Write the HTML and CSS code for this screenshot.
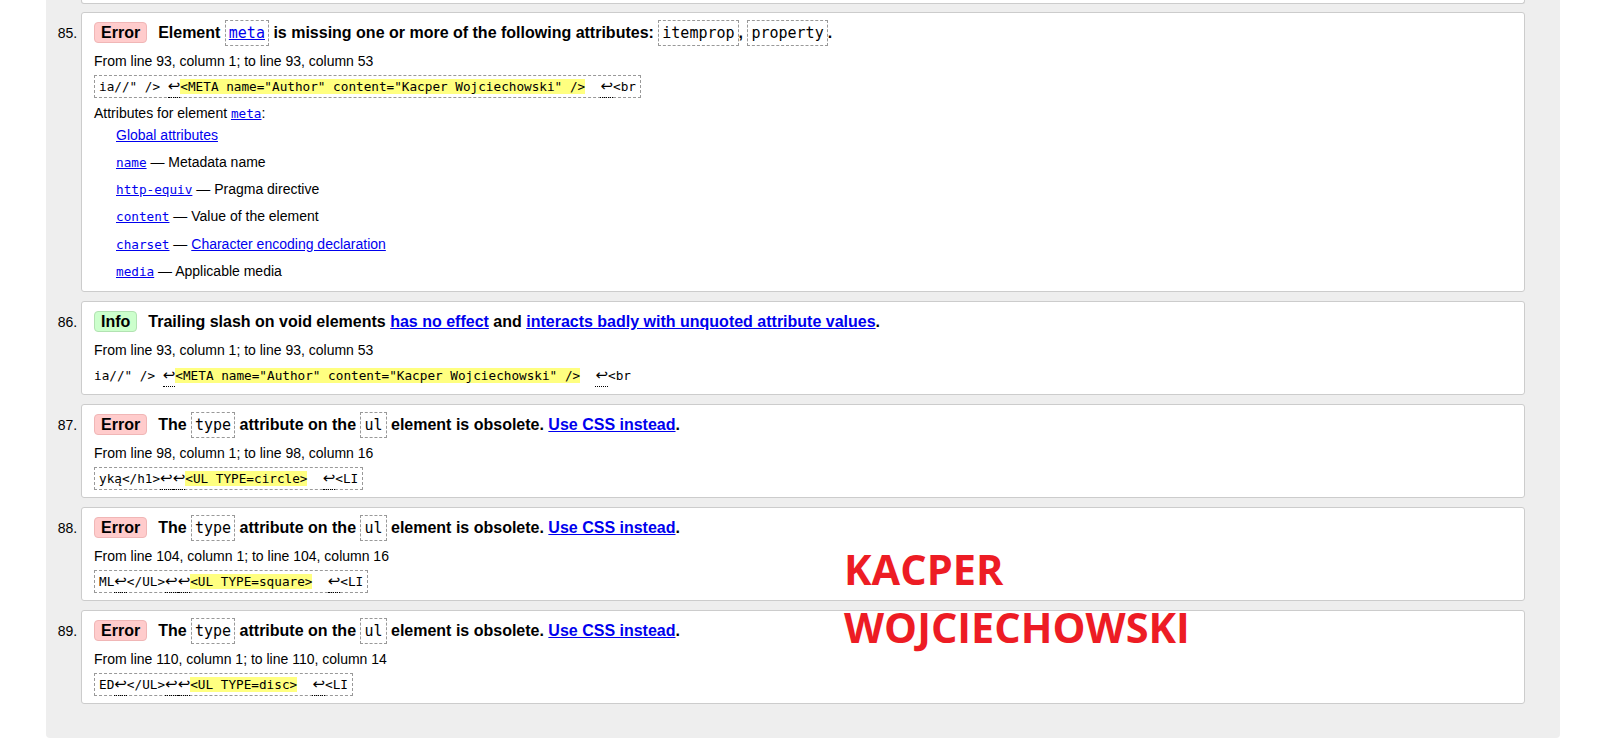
FILE: index.html
```html
<!DOCTYPE html>
<html lang="en">
<head>
<meta charset="utf-8">
<title>Validation results</title>
<link rel="stylesheet" href="styles.css">
</head>
<body>
<div class="results">
  <div class="stub"></div>
  <ol class="messages" start="85">
    <li class="msg error">
      <p class="head"><span class="badge">Error</span>Element <code class="tok"><a href="#">meta</a></code> is missing one or more of the following attributes: <code class="tok">itemprop</code>, <code class="tok">property</code>.</p>
      <p class="loc">From line 93, column 1; to line 93, column 53</p>
      <p class="extract"><code>ia//" /&gt; <span class="lf">↩</span><b class="hl">&lt;META name="Author" content="Kacper Wojciechowski" /&gt;</b>  <span class="lf">↩</span>&lt;br</code></p>
      <p class="attrs-title">Attributes for element <a href="#"><code class="mono">meta</code></a>:</p>
      <ul class="attrs">
        <li><a href="#">Global attributes</a></li>
        <li><a href="#"><code class="mono">name</code></a> — Metadata name</li>
        <li><a href="#"><code class="mono">http-equiv</code></a> — Pragma directive</li>
        <li><a href="#"><code class="mono">content</code></a> — Value of the element</li>
        <li><a href="#"><code class="mono">charset</code></a> — <a href="#">Character encoding declaration</a></li>
        <li><a href="#"><code class="mono">media</code></a> — Applicable media</li>
      </ul>
    </li>
    <li class="msg info">
      <p class="head"><span class="badge">Info</span>Trailing slash on void elements <a href="#">has no effect</a> and <a href="#">interacts badly with unquoted attribute values</a>.</p>
      <p class="loc">From line 93, column 1; to line 93, column 53</p>
      <p class="extract plain"><code>ia//" /&gt; <span class="lf">↩</span><b class="hl">&lt;META name="Author" content="Kacper Wojciechowski" /&gt;</b>  <span class="lf">↩</span>&lt;br</code></p>
    </li>
    <li class="msg error">
      <p class="head"><span class="badge">Error</span>The <code class="tok">type</code> attribute on the <code class="tok">ul</code> element is obsolete. <a href="#">Use CSS instead</a>.</p>
      <p class="loc">From line 98, column 1; to line 98, column 16</p>
      <p class="extract"><code>yką&lt;/h1&gt;<span class="lf">↩</span><span class="lf">↩</span><b class="hl">&lt;UL TYPE=circle&gt;</b>  <span class="lf">↩</span>&lt;LI</code></p>
    </li>
    <li class="msg error">
      <p class="head"><span class="badge">Error</span>The <code class="tok">type</code> attribute on the <code class="tok">ul</code> element is obsolete. <a href="#">Use CSS instead</a>.</p>
      <p class="loc">From line 104, column 1; to line 104, column 16</p>
      <p class="extract"><code>ML<span class="lf">↩</span>&lt;/UL&gt;<span class="lf">↩</span><span class="lf">↩</span><b class="hl">&lt;UL TYPE=square&gt;</b>  <span class="lf">↩</span>&lt;LI</code></p>
    </li>
    <li class="msg error">
      <p class="head"><span class="badge">Error</span>The <code class="tok">type</code> attribute on the <code class="tok">ul</code> element is obsolete. <a href="#">Use CSS instead</a>.</p>
      <p class="loc">From line 110, column 1; to line 110, column 14</p>
      <p class="extract"><code>ED<span class="lf">↩</span>&lt;/UL&gt;<span class="lf">↩</span><span class="lf">↩</span><b class="hl">&lt;UL TYPE=disc&gt;</b>  <span class="lf">↩</span>&lt;LI</code></p>
    </li>
  </ol>
</div>
<div class="signature">KACPER<br>WOJCIECHOWSKI</div>
</body>
</html>
```

FILE: styles.css
```css
* { box-sizing: border-box; }
html, body { margin: 0; padding: 0; background: #fff; }
body {
  font-family: "Liberation Sans", Arial, sans-serif;
  font-size: 14px;
  color: #000;
}
a { color: #0000ee; text-decoration: underline; }

.results {
  margin-left: 46px;
  width: 1514px;
  background: #eeeeee;
  padding: 0 35px 34px;
  border-radius: 0 0 4px 4px;
}
.stub {
  height: 4px;
  background: #fff;
  border: 1px solid #cccccc;
  border-top: 0;
  border-radius: 0 0 3px 3px;
  margin-bottom: 8px;
}
.messages {
  list-style: decimal outside;
  margin: 0;
  padding: 0;
}
.msg {
  background: #fff;
  border: 1px solid #cccccc;
  border-radius: 3px;
  padding: 6px 12px 7px;
  margin-bottom: 9px;
}
.msg:last-child { margin-bottom: 0; }
.msg::marker {
  font-family: "Liberation Sans", Arial, sans-serif;
  font-size: 14px;
  font-weight: normal;
}
.head {
  margin: 0;
  font-size: 16px;
  font-weight: bold;
  line-height: 28px;
  height: 28px;
}
.badge {
  display: inline-block;
  line-height: 19px;
  padding: 0 6px;
  border: 1px solid;
  border-radius: 4px;
  margin-right: 11px;
}
.error .badge { background: #ffcccc; border-color: #f0b6b6; }
.info .badge { background: #ccffcc; border-color: #b2e2b2; }
.tok {
  font-family: "DejaVu Sans Mono", monospace;
  font-size: 15px;
  font-weight: normal;
  line-height: 1;
  padding: 3px;
  border: 1px dashed #999;
}
.loc {
  margin: 5px 0 0;
  line-height: 18px;
}
.extract {
  display: flex;
  margin: 5px 0 0;
}
.extract code {
  display: block;
  font-family: "DejaVu Sans Mono", monospace;
  font-size: 12.7px;
  line-height: 17px;
  height: 23px;
  padding: 2px 4px;
  border: 1px dashed #999;
  white-space: pre;
}
.extract.plain code {
  border-color: transparent;
  border-left-width: 0;
  padding-left: 0;
}
.hl { font-weight: normal; background: #ffff80; }
.lf {
  font-family: "DejaVu Sans", sans-serif;
  font-size: 15px;
  line-height: 1;
  padding: 0 0 2px;
  border-bottom: 1px dotted #000;
}
.mono {
  font-family: "DejaVu Sans Mono", monospace;
  font-size: 12.7px;
  line-height: 1;
}
.attrs-title {
  margin: 6px 0 0;
  line-height: 18px;
  height: 18px;
}
.attrs {
  list-style: none;
  margin: 4px 0 4.25px 22px;
  padding: 0;
  line-height: 18px;
}
.attrs li { height: 18px; }
.attrs li + li { margin-top: 9.15px; }

.signature {
  position: absolute;
  left: 844px;
  top: 541px;
  font-family: "Open Sans", sans-serif;
  font-weight: bold;
  font-size: 41.5px;
  line-height: 57.6px;
  color: #ed1c24;
}
```
